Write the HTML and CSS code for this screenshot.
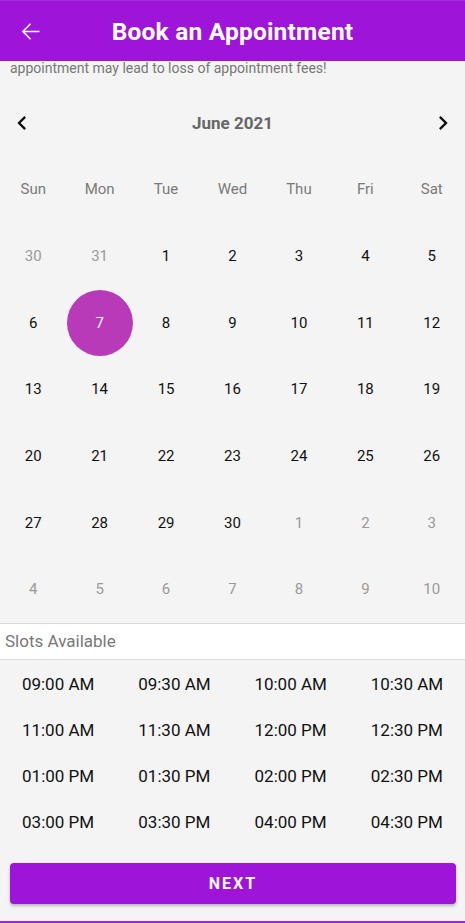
FILE: index.html
```html
<!DOCTYPE html>
<html lang="en">
<head>
    <meta charset="UTF-8">
    <meta name="viewport" content="width=device-width, initial-scale=1.0">
    <title>Book an Appointment</title>
    <link rel="stylesheet" href="styles.css">
</head>
<body>
    <div class="screen">
        <header class="topbar">
            <button class="back" aria-label="Back">
                <svg width="27" height="27" viewBox="0 0 24 24"><path d="M20 11.25H6.9l5.6-5.6-.95-.9L4.3 12l7.25 7.250.95-.9-5.6-5.6H20z" fill="#fff"/></svg>
            </button>
            <h1>Book an Appointment</h1>
        </header>

        <div class="content">
            <p class="note">appointment may lead to loss of appointment fees!</p>

            <div class="calendar">
                <div class="month">
                    <button class="nav" aria-label="Previous month">
                        <svg width="28" height="28" viewBox="0 0 24 24"><path d="M15.41 7.41 14 6l-6 6 6 6 1.41-1.41L10.83 12z" fill="#111"/></svg>
                    </button>
                    <span class="month-name">June 2021</span>
                    <button class="nav" aria-label="Next month">
                        <svg width="28" height="28" viewBox="0 0 24 24"><path d="M10 6 8.59 7.41 13.17 12l-4.58 4.59L10 18l6-6z" fill="#111"/></svg>
                    </button>
                </div>
                <div class="grid" id="grid">
                    <span class="wd">Sun</span><span class="wd">Mon</span><span class="wd">Tue</span><span class="wd">Wed</span><span class="wd">Thu</span><span class="wd">Fri</span><span class="wd">Sat</span>
                </div>
            </div>

            <div class="slots-title">Slots Available</div>

            <div class="slots" id="slots"></div>

            <button class="next">NEXT</button>
        </div>
    </div>

    <script>
        // fill the days of the month
        const grid = document.getElementById('grid');
        const days = [];
        days.push({ n: 30, out: true }, { n: 31, out: true });
        for (let i = 1; i <= 30; i++) days.push({ n: i });
        for (let i = 1; i <= 10; i++) days.push({ n: i, out: true });

        days.forEach(d => {
            const cell = document.createElement('span');
            cell.className = 'day';
            if (d.out) cell.classList.add('out');
            if (!d.out && d.n === 7) cell.classList.add('selected');
            const num = document.createElement('span');
            num.className = 'num';
            num.textContent = d.n;
            cell.appendChild(num);
            grid.appendChild(cell);
        });

        // time slots
        const times = ['09:00 AM', '09:30 AM', '10:00 AM', '10:30 AM', '11:00 AM', '11:30 AM', '12:00 PM', '12:30 PM',
            '01:00 PM', '01:30 PM', '02:00 PM', '02:30 PM', '03:00 PM', '03:30 PM', '04:00 PM', '04:30 PM'];
        const slots = document.getElementById('slots');
        times.forEach(t => {
            const s = document.createElement('span');
            s.className = 'slot';
            s.textContent = t;
            slots.appendChild(s);
        });
    </script>
</body>
</html>
```

FILE: styles.css
```css
* {
    box-sizing: border-box;
}
body {
    margin: 0;
    font-family: Roboto, "Noto Sans", Arial, sans-serif;
    background-color: #f4f4f4;
}
.screen {
    width: 465px;
    height: 923px;
    overflow: hidden;
    display: flex;
    flex-direction: column;
    border-bottom: 2px solid #a127dd;
}
.topbar {
    height: 61px;
    flex-shrink: 0;
    background-color: #9e14d9;
    border-top: 1px solid #a52ce0;
    display: flex;
    align-items: center;
}
.back {
    background: none;
    border: none;
    padding: 0;
    margin-left: 17px;
    width: 27px;
    height: 27px;
    display: flex;
}
.topbar h1 {
    margin: 0;
    flex: 1;
    text-align: center;
    color: #fff;
    font-size: 24.5px;
    font-weight: 700;
    padding-right: 44px;
    letter-spacing: 0.2px;
}
.content {
    flex: 1;
    display: flex;
    flex-direction: column;
}
.note {
    margin: -1px 0 0 10px;
    font-size: 14px;
    line-height: 16px;
    color: #777;
}
.month {
    height: 66px;
    margin-top: 14px;
    display: flex;
    align-items: center;
    justify-content: space-between;
    padding: 0 8px;
}
.nav {
    background: none;
    border: none;
    padding: 0;
    width: 28px;
    height: 28px;
    display: flex;
}
.month-name {
    font-size: 17px;
    font-weight: 700;
    color: #666;
}
.grid {
    display: grid;
    grid-template-columns: repeat(7, 1fr);
    grid-auto-rows: 66.7px;
}
.wd {
    display: flex;
    align-items: center;
    justify-content: center;
    font-size: 15px;
    color: #7a7a7a;
}
.day {
    display: flex;
    align-items: center;
    justify-content: center;
    font-size: 15px;
    color: #111;
}
.day.out {
    color: #9a9a9a;
}
.num {
    width: 66px;
    height: 66px;
    border-radius: 50%;
    display: flex;
    align-items: center;
    justify-content: center;
}
.day.selected .num {
    background-color: #b83ab8;
    color: #fff;
}
.slots-title {
    background-color: #fff;
    border-top: 1px solid #d8d8d8;
    border-bottom: 1px solid #d8d8d8;
    height: 37px;
    padding-left: 5px;
    display: flex;
    align-items: center;
    font-size: 17px;
    color: #777;
}
.slots {
    display: grid;
    grid-template-columns: repeat(4, 1fr);
    grid-auto-rows: 46px;
    padding-top: 1px;
}
.slot {
    display: flex;
    align-items: center;
    justify-content: center;
    font-size: 17px;
    color: #111;
}
.next {
    margin: 18px 9px 0 10px;
    height: 41px;
    background-color: #9e14d9;
    color: #fff;
    border: none;
    border-radius: 4px;
    font-family: Roboto, Arial, sans-serif;
    font-size: 16px;
    font-weight: 700;
    letter-spacing: 2px;
    box-shadow: 0 2px 3px rgba(0, 0, 0, 0.25);
}
```
